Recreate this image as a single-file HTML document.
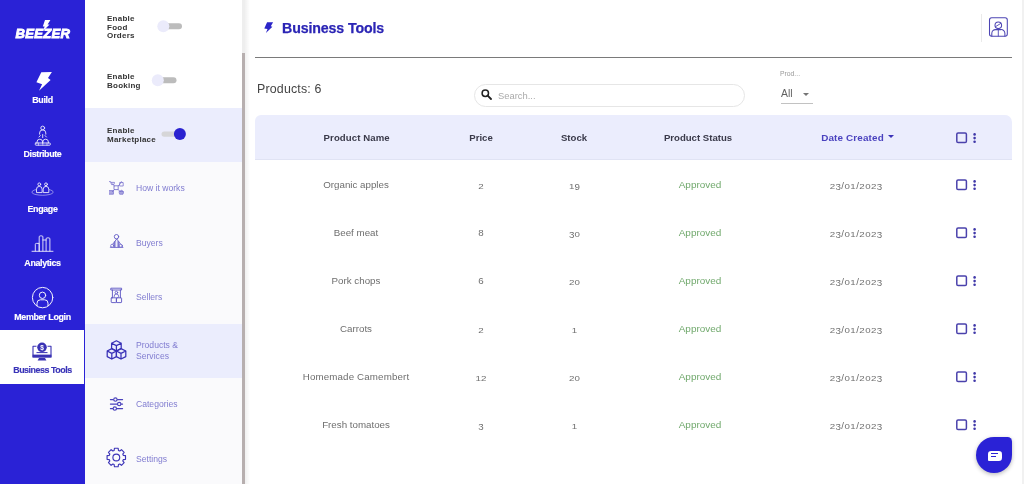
<!DOCTYPE html>
<html><head><meta charset="utf-8">
<style>
*{box-sizing:border-box;margin:0;padding:0}
html,body{width:1024px;height:484px;overflow:hidden;background:#fff;font-family:"Liberation Sans",sans-serif;}
.abs{position:absolute}
#side{position:absolute;left:0;top:0;width:85.3px;height:484px;background:#2a22d6}
.nav{position:absolute;left:0;width:85px;text-align:center;color:#fff;font-size:8.9px;font-weight:bold;letter-spacing:-0.35px;white-space:nowrap;-webkit-text-stroke:0.15px currentColor}
#panel{position:absolute;left:85px;top:0;width:157px;height:484px;background:#fafafc}
#ptop{position:absolute;left:0;top:0;width:157px;height:108px;background:#fff}
.hl{position:absolute;left:0;width:157px;background:#ebedfd}
.en{position:absolute;left:22px;font-size:8px;font-weight:bold;color:#333;line-height:8.65px;letter-spacing:0.25px}
.mi{position:absolute;left:51px;font-size:8.6px;color:#807cd0;line-height:10.2px}
#sb{position:absolute;left:242px;top:0;width:3.5px;height:484px;background:#eee}
#sbt{position:absolute;left:0;top:52.5px;width:3.5px;height:432px;background:#b7afaf}
#main{position:absolute;left:245px;top:0;width:779px;height:484px;background:#fff}
.th{position:absolute;top:132px;font-size:9.6px;font-weight:bold;color:#3a3a4a;transform:translateX(-50%);white-space:nowrap}
.td{position:absolute;margin-top:0.4px;font-size:9.75px;color:#6e6e6e;transform:translateX(-50%);white-space:nowrap}
.dots{width:2.6px;height:2.6px;border-radius:50%;background:#3c34a6}
.o{display:inline-block;transform:translateY(.2px) scaleY(.79);transform-origin:50% 100%}
.d{display:inline-block;transform:translateY(1.5px)}
.sl{display:inline-block;transform:translateY(1.1px)}
.dt{letter-spacing:0.42px}
#side,#panel,#main{will-change:transform}
</style></head><body>
<div id="side">
  <svg class="abs" style="left:0;top:0" width="85" height="484" viewBox="0 0 85 484" fill="none" stroke="#fff" stroke-width="0.9" stroke-linecap="round" stroke-linejoin="round">
    <!-- logo bolt -->
    <path d="M45 20 L50.4 20 L47.6 24.6 L49.6 24.6 L43 31 L44.6 26.4 L42.8 26.4 Z" fill="#fff" stroke="none"/>
    <!-- build bolt -->
    <path d="M41.3 72.2 L51.9 71.9 L48 78.1 L50.6 80.1 L39 90.8 L42.1 84.3 L36.4 82.2 Z" fill="#fff" stroke="none"/>
    <!-- distribute -->
    <g opacity="0.92">
    <circle cx="42.7" cy="128" r="1.9"/>
    <path d="M39.6 134.2 v-1.2 a3.1 3.1 0 0 1 6.2 0 v1.2"/>
    <path d="M42.7 134.5 v3.2 M40.3 135.6 l-1.3 1.4 M45.1 135.6 l1.3 1.4"/>
    <path d="M37 143 v-1 a2.8 2.8 0 0 1 5.6 0 v1 M42.8 143 v-1 a2.8 2.8 0 0 1 5.6 0 v1"/>
    <rect x="35.3" y="143" width="15" height="2.2" rx="0.6"/>
    <path d="M38.5 143 v2.2 M42.8 143 v2.2 M47 143 v2.2" stroke-width="0.6"/>
    </g>
    <!-- engage -->
    <g opacity="0.92">
    <circle cx="39.3" cy="184.3" r="1.4"/><circle cx="46" cy="184.3" r="1.4"/>
    <path d="M36.5 192.2 v-3 a2.8 2.8 0 0 1 5.6 0 v3 Z M43.2 192.2 v-3 a2.8 2.8 0 0 1 5.6 0 v3 Z"/>
    <path d="M36 189.6 C30.5 190.8 30.5 193.4 36 194.6 C40 195.5 45 195.5 49 194.6 C54.6 193.4 54.6 190.8 49.2 189.6" stroke-width="0.6" opacity="0.85"/>
    </g>
    <!-- analytics -->
    <g opacity="0.92">
    <path d="M32 251.3 H53"/>
    <path d="M35.3 251 V244.4 a1 1 0 0 1 1 -1 H39.2 V251 M39.2 251 V236.9 a1 1 0 0 1 1 -1 H41.9 a1 1 0 0 1 1 1 V251 M42.9 240 H46.1 M46.1 251 V238.9 a1 1 0 0 1 1 -1 H48.9 a1 1 0 0 1 1 1 V251"/>
    </g>
    <!-- member login -->
    <g opacity="0.95">
    <circle cx="42.6" cy="297.6" r="10.2" stroke-width="1"/>
    <circle cx="42.5" cy="295.3" r="3.2" stroke-width="1"/>
    <path d="M37 305.8 v-2.6 a3.4 3.4 0 0 1 3.4 -3.4 h4.2 a3.4 3.4 0 0 1 3.4 3.4 v2.6" stroke-width="1"/>
    </g>
  </svg>
  <div class="abs" id="logo" style="left:15.6px;top:26px;font-size:13px;font-weight:bold;font-style:italic;color:#fff;letter-spacing:0.3px;-webkit-text-stroke:0.9px #fff;white-space:nowrap">BEEZER</div>
  <div class="nav" style="top:95px">Build</div>
  <div class="nav" style="top:149px">Distribute</div>
  <div class="nav" style="top:203.5px">Engage</div>
  <div class="nav" style="top:258px">Analytics</div>
  <div class="nav" style="top:312px">Member Login</div>
  <div class="abs" style="left:0;top:329.5px;width:84.3px;height:54.5px;background:#fff"></div>
  <svg class="abs" style="left:0;top:330px" width="84" height="53" viewBox="0 330 84 53" fill="none" stroke="#3a32b4" stroke-width="1.1" stroke-linejoin="round">
    <path d="M36.5 346.3 H33 V357 H51 V346.3 H47.5"/>
    <rect x="32.6" y="354.6" width="18.8" height="2.8" fill="#3a32b4" stroke="none"/>
    <path d="M39 358 H45 L46.4 360.6 H37.6 Z" fill="#3a32b4" stroke="none"/>
    <path d="M36.5 352.6 H47.5" stroke-width="1"/>
    <circle cx="42" cy="347.3" r="4.8" fill="#3a32b4" stroke="none"/>
    <text x="42" y="350" font-size="6.5" font-weight="bold" fill="#fff" stroke="none" text-anchor="middle" font-family="Liberation Sans, sans-serif">$</text>
  </svg>
  <div class="nav" style="top:364.8px;color:#3a34b8;letter-spacing:-0.45px">Business Tools</div>
</div>
<div id="panel">
  <div id="ptop"></div>
  <div class="hl" style="top:108px;height:54px"></div>
  <div class="hl" style="top:324px;height:54px"></div>
  <svg class="abs" style="left:0;top:0" width="156" height="484" viewBox="85 0 156 484" fill="none" stroke="#5048c0" stroke-width="0.9" stroke-linecap="round" stroke-linejoin="round">
    <!-- toggles -->
    <g stroke="none">
      <rect x="164" y="23.3" width="18" height="6" rx="3" fill="#bcbcbc"/>
      <circle cx="163.3" cy="26.3" r="6" fill="#ebebfb"/>
      <rect x="158.5" y="77.3" width="18" height="6" rx="3" fill="#bcbcbc"/>
      <circle cx="157.8" cy="80.3" r="6" fill="#ebebfb"/>
      <rect x="161.5" y="131.4" width="18" height="5.4" rx="2.7" fill="#d6d6d8"/>
      <circle cx="179.9" cy="134.1" r="6" fill="#2a22d0"/>
    </g>
    <!-- how it works -->
    <g opacity="0.75">
      <rect x="114.4" y="185.8" width="3.8" height="3.8"/>
      <path d="M114.4 185.8 L112 183.6 M118.2 185.8 L120.4 183.6 M114.4 189.6 L112.2 191.8 M118.2 189.6 L120.4 191.8"/>
      <path d="M109.4 181.6 h1.2 l0.9 3 h2.4 l0.6 -2.2 h-3.4" stroke-width="0.8"/>
      <path d="M119.6 185.6 v-3 h3.6 v3 Z M120.5 182.6 a0.9 0.9 0 0 1 1.8 0" stroke-width="0.8"/>
      <rect x="109.4" y="190.6" width="4" height="3.6" fill="#5048c0" fill-opacity="0.6" stroke-width="0.8"/>
      <path d="M119.4 191.6 h4.2 l-0.6 2.6 h-3 Z M120.2 191.6 a1.3 1.3 0 0 1 2.6 0" fill="#5048c0" fill-opacity="0.6" stroke-width="0.8"/>
    </g>
    <!-- buyers -->
    <g opacity="0.9">
      <circle cx="116.5" cy="236.7" r="2.2"/>
      <path d="M116.5 239.2 L110.3 247.4 H122.7 Z" fill="#5048c0" fill-opacity="0.45" stroke-width="0.8"/>
      <path d="M114.4 241.6 V247 M118.6 241.6 V247" stroke-width="0.7"/>
      <path d="M116.5 240.4 V246.6" stroke="#fafafc" stroke-width="0.8"/>
      <circle cx="112.2" cy="245.7" r="1.5" fill="#fafafc" stroke-width="0.7"/>
      <circle cx="120.8" cy="245.7" r="1.5" fill="#fafafc" stroke-width="0.7"/>
    </g>
    <!-- sellers -->
    <g opacity="0.95">
      <rect x="111.2" y="288.2" width="10.4" height="1.8"/>
      <path d="M112.4 290 V297.8 M120.4 290 V297.8"/>
      <circle cx="116.4" cy="292.6" r="1.3" stroke-width="0.8"/>
      <path d="M114.2 297 v-0.8 a2.2 2.2 0 0 1 4.4 0 v0.8" stroke-width="0.8"/>
      <rect x="111.2" y="297.8" width="5.2" height="4.8" rx="0.6"/>
      <rect x="116.4" y="297.8" width="5.2" height="4.8" rx="0.6"/>
    </g>
    <!-- products cubes -->
    <g stroke="#372fb6" stroke-width="1.25">
      <path d="M116.4 340.8 L121.2 343.2 V348.6 L116.4 351 L111.6 348.6 V343.2 Z M111.6 343.2 L116.4 345.6 L121.2 343.2 M116.4 345.6 V351"/>
      <path d="M111.8 348.6 L116.4 351 V356.6 L111.8 359 L107.2 356.6 V351 Z M107.2 351 L111.8 353.4 L116.4 351 M111.8 353.4 V359"/>
      <path d="M121 348.6 L125.8 351 V356.6 L121 359 L116.4 356.6 V351 Z M116.4 351 L121 353.4 L125.8 351 M121 353.4 V359"/>
    </g>
    <!-- categories sliders -->
    <g stroke="#4a42bc" stroke-width="1.1">
      <path d="M110.4 399.6 H122.6 M110.4 404.1 H122.6 M110.4 408.6 H122.6"/>
      <circle cx="115.4" cy="399.6" r="1.7" fill="#fafafc"/>
      <circle cx="119.2" cy="404.1" r="1.7" fill="#fafafc"/>
      <circle cx="114.8" cy="408.6" r="1.7" fill="#fafafc"/>
    </g>
    <!-- settings gear -->
    <g stroke="#3d35b8" stroke-width="1.15" ><path d="M114.14 450.53 L114.43 448.29 L118.17 448.29 L118.46 450.53 L119.71 451.04 L121.49 449.67 L124.13 452.31 L122.76 454.09 L123.27 455.34 L125.51 455.63 L125.51 459.37 L123.27 459.66 L122.76 460.91 L124.13 462.69 L121.49 465.33 L119.71 463.96 L118.46 464.47 L118.17 466.71 L114.43 466.71 L114.14 464.47 L112.89 463.96 L111.11 465.33 L108.47 462.69 L109.84 460.91 L109.33 459.66 L107.09 459.37 L107.09 455.63 L109.33 455.34 L109.84 454.09 L108.47 452.31 L111.11 449.67 L112.89 451.04 Z" stroke-linejoin="round"/><circle cx="116.3" cy="457.5" r="3.4"/></g>
  </svg>
  <div class="en" style="top:15px">Enable<br>Food<br>Orders</div>
  <div class="en" style="top:73px">Enable<br>Booking</div>
  <div class="en" style="top:127px">Enable<br>Marketplace</div>
  <div class="mi" style="top:183.1px">How it works</div>
  <div class="mi" style="top:237.6px">Buyers</div>
  <div class="mi" style="top:292px">Sellers</div>
  <div class="mi" style="top:340.4px">Products &amp;<br>Services</div>
  <div class="mi" style="top:399.2px">Categories</div>
  <div class="mi" style="top:453.7px">Settings</div>
</div>
<div id="sb"><div id="sbt"></div></div>
<div id="main">
  <div class="abs" style="left:0;top:0;width:4.5px;height:484px;background:linear-gradient(90deg,rgba(0,0,0,0.06),rgba(0,0,0,0))"></div>
  <div class="abs" id="ttl" style="left:37px;top:20px;font-size:14.2px;font-weight:bold;color:#2b25b5;white-space:nowrap;letter-spacing:-0.12px;-webkit-text-stroke:0.25px #2b25b5">Business Tools</div>
  <svg class="abs" style="left:19px;top:22px" width="10" height="12" viewBox="0 0 10 12"><path d="M3.1 0.3 L9.1 0.2 L6.8 4.2 L8.4 4.8 L1.9 10.9 L3.5 6.9 L0.3 6.5 Z" fill="#2b25c8"/></svg>
  <div class="abs" style="left:10px;top:57px;width:757px;height:1px;background:#7a7a7a"></div>
  <div class="abs" style="left:736px;top:14px;width:1px;height:28px;background:#eaeaea"></div>
  <svg class="abs" style="left:743px;top:16px" width="22" height="22" viewBox="988 16 22 22" fill="none" stroke="#4d45b4" stroke-width="1.05" stroke-linejoin="round" stroke-linecap="round">
    <rect x="989.5" y="17.7" width="17.8" height="18.6" rx="2.2"/>
    <circle cx="998.3" cy="25.3" r="3.3"/>
    <path d="M995.6 26.6 L1000.8 23.4" stroke-width="0.9"/>
    <path d="M991.8 36 V33.4 A3.8 3.8 0 0 1 995.6 29.6 H1001 A3.8 3.8 0 0 1 1004.9 33.4 V36"/>
    <path d="M998.3 29.8 V36" stroke-width="0.9"/>
  </svg>
  <div class="abs" id="pcount" style="left:12px;top:82px;font-size:12.4px;letter-spacing:0.18px;color:#444;white-space:nowrap">Products: 6</div>
  <div class="abs" style="left:229px;top:84px;width:271px;height:23px;border:1px solid #e6e6e6;border-radius:11.5px;background:#fff"></div>
  <svg class="abs" style="left:236px;top:89px" width="11" height="11" viewBox="0 0 11 11"><circle cx="4.3" cy="4.3" r="3.2" fill="none" stroke="#222" stroke-width="1.5"/><path d="M6.7 6.7 L10 10" stroke="#222" stroke-width="1.8" stroke-linecap="round"/></svg>
  <div class="abs" id="srch" style="left:253px;top:90px;font-size:9.4px;color:#aaa">Search...</div>
  <div class="abs" style="left:535px;top:70px;font-size:6.8px;color:#999">Prod...</div>
  <div class="abs" id="all" style="left:536px;top:87.5px;font-size:10.4px;color:#606060">All</div>
  <svg class="abs" style="left:558px;top:93px" width="6" height="3" viewBox="0 0 6 3"><path d="M0 0 L6 0 L3 3 Z" fill="#757575"/></svg>
  <div class="abs" style="left:536px;top:103px;width:32px;height:1px;background:#c2c2c2"></div>
  <div class="abs" style="left:10.3px;top:114.7px;width:756.5px;height:45.6px;background:#ebedfd;border-radius:6px 7px 0 0;border-bottom:1px solid #e0e3f4"></div>
  <div class="th" style="left:111.7px;letter-spacing:0.1px">Product Name</div>
  <div class="th" style="left:236px">Price</div>
  <div class="th" style="left:329px">Stock</div>
  <div class="th" style="left:453px">Product Status</div>
  <div class="th" style="left:607.5px;color:#4a42bf;font-size:9.9px;letter-spacing:0.15px">Date Created</div>
  <svg class="abs" style="left:643px;top:135px" width="6" height="3" viewBox="0 0 6 3"><path d="M0 0 L6 0 L3 3 Z" fill="#3a32b8"/></svg>
  <svg class="abs" style="left:700px;top:120px" width="50" height="320" viewBox="945 120 50 320" fill="none" stroke="#4a41ac" stroke-width="1.5"><rect x="956.8" y="133.0" width="9.6" height="9.6" rx="1.3"/><g fill="#3f37a8" stroke="none"><circle cx="974.6" cy="134.4" r="1.3"/><circle cx="974.6" cy="138.1" r="1.3"/><circle cx="974.6" cy="141.8" r="1.3"/></g><rect x="956.8" y="180.0" width="9.6" height="9.6" rx="1.3"/><g fill="#3f37a8" stroke="none"><circle cx="974.6" cy="181.4" r="1.3"/><circle cx="974.6" cy="185.1" r="1.3"/><circle cx="974.6" cy="188.8" r="1.3"/></g><rect x="956.8" y="228.0" width="9.6" height="9.6" rx="1.3"/><g fill="#3f37a8" stroke="none"><circle cx="974.6" cy="229.4" r="1.3"/><circle cx="974.6" cy="233.1" r="1.3"/><circle cx="974.6" cy="236.8" r="1.3"/></g><rect x="956.8" y="276.0" width="9.6" height="9.6" rx="1.3"/><g fill="#3f37a8" stroke="none"><circle cx="974.6" cy="277.4" r="1.3"/><circle cx="974.6" cy="281.1" r="1.3"/><circle cx="974.6" cy="284.8" r="1.3"/></g><rect x="956.8" y="324.0" width="9.6" height="9.6" rx="1.3"/><g fill="#3f37a8" stroke="none"><circle cx="974.6" cy="325.4" r="1.3"/><circle cx="974.6" cy="329.1" r="1.3"/><circle cx="974.6" cy="332.8" r="1.3"/></g><rect x="956.8" y="372.0" width="9.6" height="9.6" rx="1.3"/><g fill="#3f37a8" stroke="none"><circle cx="974.6" cy="373.4" r="1.3"/><circle cx="974.6" cy="377.1" r="1.3"/><circle cx="974.6" cy="380.8" r="1.3"/></g><rect x="956.8" y="420.0" width="9.6" height="9.6" rx="1.3"/><g fill="#3f37a8" stroke="none"><circle cx="974.6" cy="421.4" r="1.3"/><circle cx="974.6" cy="425.1" r="1.3"/><circle cx="974.6" cy="428.8" r="1.3"/></g></svg>
  <div class="td" style="left:111px;top:179px">Organic apples</div><div class="td" style="left:236px;top:179px"><span class="o">2</span></div><div class="td" style="left:329.5px;top:179px"><span class="o">1</span><span class="d">9</span></div><div class="td" style="left:455px;top:179px;color:#71a96d;font-size:9.95px">Approved</div><div class="td dt" style="left:611.2px;top:179px"><span class="o">2</span><span class="d">3</span><span class="sl">/</span><span class="o">0</span><span class="o">1</span><span class="sl">/</span><span class="o">2</span><span class="o">0</span><span class="o">2</span><span class="d">3</span></div>
  <div class="td" style="left:111px;top:227px">Beef meat</div><div class="td" style="left:236px;top:227px">8</div><div class="td" style="left:329.5px;top:227px"><span class="d">3</span><span class="o">0</span></div><div class="td" style="left:455px;top:227px;color:#71a96d;font-size:9.95px">Approved</div><div class="td dt" style="left:611.2px;top:227px"><span class="o">2</span><span class="d">3</span><span class="sl">/</span><span class="o">0</span><span class="o">1</span><span class="sl">/</span><span class="o">2</span><span class="o">0</span><span class="o">2</span><span class="d">3</span></div>
  <div class="td" style="left:111px;top:275px">Pork chops</div><div class="td" style="left:236px;top:275px">6</div><div class="td" style="left:329.5px;top:275px"><span class="o">2</span><span class="o">0</span></div><div class="td" style="left:455px;top:275px;color:#71a96d;font-size:9.95px">Approved</div><div class="td dt" style="left:611.2px;top:275px"><span class="o">2</span><span class="d">3</span><span class="sl">/</span><span class="o">0</span><span class="o">1</span><span class="sl">/</span><span class="o">2</span><span class="o">0</span><span class="o">2</span><span class="d">3</span></div>
  <div class="td" style="left:111px;top:323px">Carrots</div><div class="td" style="left:236px;top:323px"><span class="o">2</span></div><div class="td" style="left:329.5px;top:323px"><span class="o">1</span></div><div class="td" style="left:455px;top:323px;color:#71a96d;font-size:9.95px">Approved</div><div class="td dt" style="left:611.2px;top:323px"><span class="o">2</span><span class="d">3</span><span class="sl">/</span><span class="o">0</span><span class="o">1</span><span class="sl">/</span><span class="o">2</span><span class="o">0</span><span class="o">2</span><span class="d">3</span></div>
  <div class="td" style="left:111px;top:371px;letter-spacing:0.14px">Homemade Camembert</div><div class="td" style="left:236px;top:371px"><span class="o">1</span><span class="o">2</span></div><div class="td" style="left:329.5px;top:371px"><span class="o">2</span><span class="o">0</span></div><div class="td" style="left:455px;top:371px;color:#71a96d;font-size:9.95px">Approved</div><div class="td dt" style="left:611.2px;top:371px"><span class="o">2</span><span class="d">3</span><span class="sl">/</span><span class="o">0</span><span class="o">1</span><span class="sl">/</span><span class="o">2</span><span class="o">0</span><span class="o">2</span><span class="d">3</span></div>
  <div class="td" style="left:111px;top:419px">Fresh tomatoes</div><div class="td" style="left:236px;top:419px"><span class="d">3</span></div><div class="td" style="left:329.5px;top:419px"><span class="o">1</span></div><div class="td" style="left:455px;top:419px;color:#71a96d;font-size:9.95px">Approved</div><div class="td dt" style="left:611.2px;top:419px"><span class="o">2</span><span class="d">3</span><span class="sl">/</span><span class="o">0</span><span class="o">1</span><span class="sl">/</span><span class="o">2</span><span class="o">0</span><span class="o">2</span><span class="d">3</span></div>
  <div class="abs" style="left:731.4px;top:437px;width:35.8px;height:35.8px;background:#2a22d6;border-radius:18px 4.5px 18px 18px;box-shadow:0 1.5px 4px rgba(0,0,0,.28)"></div>
  <div class="abs" style="left:742.6px;top:451.2px;width:14.6px;height:10px;background:#fff;border-radius:3.2px 3.2px 3.2px 1px"></div>
  <div class="abs" style="left:745.7px;top:453.3px;width:7.6px;height:1.2px;background:#2a22d6"></div>
  <div class="abs" style="left:745.7px;top:456.3px;width:5px;height:1.2px;background:#2a22d6"></div>
</div>
<div class="abs" style="left:1021.5px;top:0;width:3px;height:484px;background:#f1f1f1"></div>
</body></html>
